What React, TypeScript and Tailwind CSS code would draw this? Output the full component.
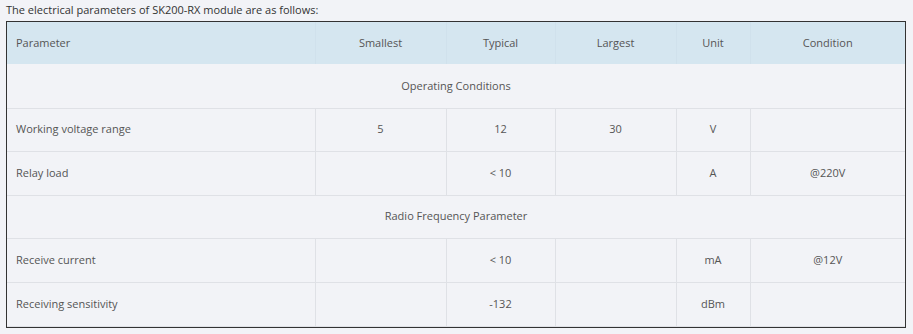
import React from "react";

interface Row {
  name: string;
  min?: string;
  typ?: string;
  max?: string;
  unit?: string;
  cond?: string;
  section?: boolean;
  h: string;
}

const rows: Row[] = [
  { name: "Operating Conditions", section: true, h: "h-[44px]" },
  { name: "Working voltage range", min: "5", typ: "12", max: "30", unit: "V", h: "h-[43px]" },
  { name: "Relay load", typ: "< 10", unit: "A", cond: "@220V", h: "h-[44px]" },
  { name: "Radio Frequency Parameter", section: true, h: "h-[43px]" },
  { name: "Receive current", typ: "< 10", unit: "mA", cond: "@12V", h: "h-[44px]" },
  { name: "Receiving sensitivity", typ: "-132", unit: "dBm", h: "h-[44px]" },
];

const cell = "border border-[#dfe1e6] text-center align-middle";

export default function App() {
  return (
    <div className="w-[913px] h-[334px] bg-[#f2f3f7] px-[6px] text-[11px] text-[#555] font-['Open_Sans',sans-serif]">
      <p className="h-[21px] leading-[19px] text-[#333]">
        The electrical parameters of SK200-RX module are as follows:
      </p>
      <div className="w-[900px] border border-[#333]">
        <table className="w-full table-fixed border-collapse">
          <colgroup>
            <col className="w-[308px]" />
            <col className="w-[131px]" />
            <col className="w-[109px]" />
            <col className="w-[121px]" />
            <col className="w-[74px]" />
            <col />
          </colgroup>
          <thead>
            <tr className="h-[42px] bg-[#d5e6f0]">
              <th className="border-r border-[#d0e1ec] text-left font-normal pl-[9px]">Parameter</th>
              <th className="border-r border-[#d0e1ec] font-normal">Smallest</th>
              <th className="border-r border-[#d0e1ec] font-normal">Typical</th>
              <th className="border-r border-[#d0e1ec] font-normal">Largest</th>
              <th className="border-r border-[#d0e1ec] font-normal">Unit</th>
              <th className="font-normal">Condition</th>
            </tr>
          </thead>
          <tbody>
            {rows.map((r) =>
              r.section ? (
                <tr key={r.name} className={r.h}>
                  <td colSpan={6} className="border-b border-[#dfe1e6] text-center">
                    {r.name}
                  </td>
                </tr>
              ) : (
                <tr key={r.name} className={r.h}>
                  <td className="border-b border-r border-[#dfe1e6] text-left pl-[9px]">{r.name}</td>
                  <td className={cell}>{r.min}</td>
                  <td className={cell}>{r.typ}</td>
                  <td className={cell}>{r.max}</td>
                  <td className={cell}>{r.unit}</td>
                  <td className="border-b border-[#dfe1e6] text-center">{r.cond}</td>
                </tr>
              )
            )}
          </tbody>
        </table>
      </div>
    </div>
  );
}
